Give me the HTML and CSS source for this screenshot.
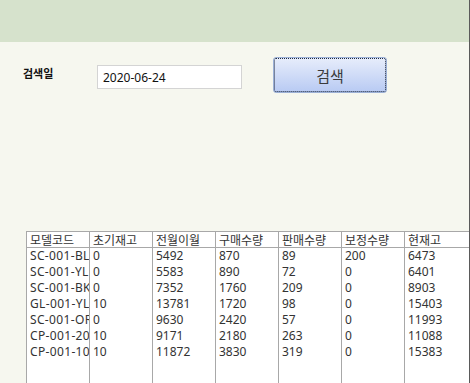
FILE: index.html
```html
<!DOCTYPE html>
<html lang="ko">
<head>
<meta charset="utf-8">
<title>재고 조회</title>
<link rel="stylesheet" href="styles.css">
</head>
<body>
<div class="window">
  <div class="topbar"></div>
  <div class="content">
    <div class="search-row">
      <label class="search-label" for="date">검색일</label>
      <input class="date-input" id="date" type="text" value="2020-06-24">
      <button class="search-btn" type="button">검색</button>
    </div>
    <div class="grid">
      <div class="hd">모델코드</div><div class="hd">초기재고</div><div class="hd">전월이월</div><div class="hd">구매수량</div><div class="hd">판매수량</div><div class="hd">보정수량</div><div class="hd">현재고</div>

      <div class="cell code">SC-001-BL</div><div class="cell">0</div><div class="cell">5492</div><div class="cell">870</div><div class="cell">89</div><div class="cell">200</div><div class="cell">6473</div>
      <div class="cell code">SC-001-YL</div><div class="cell">0</div><div class="cell">5583</div><div class="cell">890</div><div class="cell">72</div><div class="cell">0</div><div class="cell">6401</div>
      <div class="cell code">SC-001-BK</div><div class="cell">0</div><div class="cell">7352</div><div class="cell">1760</div><div class="cell">209</div><div class="cell">0</div><div class="cell">8903</div>
      <div class="cell code">GL-001-YL</div><div class="cell">10</div><div class="cell">13781</div><div class="cell">1720</div><div class="cell">98</div><div class="cell">0</div><div class="cell">15403</div>
      <div class="cell code">SC-001-OR</div><div class="cell">0</div><div class="cell">9630</div><div class="cell">2420</div><div class="cell">57</div><div class="cell">0</div><div class="cell">11993</div>
      <div class="cell code">CP-001-20</div><div class="cell">10</div><div class="cell">9171</div><div class="cell">2180</div><div class="cell">263</div><div class="cell">0</div><div class="cell">11088</div>
      <div class="cell code">CP-001-10</div><div class="cell">10</div><div class="cell">11872</div><div class="cell">3830</div><div class="cell">319</div><div class="cell">0</div><div class="cell">15383</div>

      <div class="cell"></div><div class="cell"></div><div class="cell"></div><div class="cell"></div><div class="cell"></div><div class="cell"></div><div class="cell"></div>
    </div>
  </div>
</div>
</body>
</html>
```

FILE: styles.css
```css
html, body {
  margin: 0;
  padding: 0;
}

body {
  font-family: "Noto Sans", "Noto Sans CJK KR", sans-serif;
  background: #f6f7ef;
  color: #333;
}

.window {
  width: 469px;
  height: 383px;
  border-right: 1px solid #5a5a5a;
  display: flex;
  flex-direction: column;
  overflow: hidden;
  background: #f6f7ef;
}

.topbar {
  height: 42px;
  flex: none;
  background: #d6e2cc;
}

.content {
  flex: 1;
  display: flex;
  flex-direction: column;
  min-height: 0;
}

.search-row {
  display: flex;
  align-items: flex-start;
  padding: 15px 0 0 23px;
  height: 36px;
}

.search-label {
  width: 74px;
  margin-top: 8px;
  font-family: "Noto Sans CJK KR", sans-serif;
  font-weight: bold;
  font-size: 11px;
  line-height: 16px;
  color: #111;
}

.date-input {
  box-sizing: border-box;
  width: 145px;
  height: 24px;
  margin: 8px 0 0 0;
  padding: 0 0 0 5px;
  border: 1px solid #d4d4d4;
  background: #fff;
  font-family: "Noto Sans", "Noto Sans CJK KR", sans-serif;
  font-size: 12px;
  color: #111;
  outline: none;
}

.search-btn {
  box-sizing: border-box;
  width: 114px;
  height: 36px;
  margin-left: 31px;
  padding: 0;
  border: 1px solid #9cb0d6;
  border-radius: 3px;
  background: linear-gradient(to bottom, #e7edfb, #b8caf3);
  outline: 1px dotted #1e2a40;
  outline-offset: -2px;
  font-family: "Noto Sans CJK KR", sans-serif;
  font-size: 15px;
  color: #3a3a3a;
}

.grid {
  flex: 1;
  margin: 138px 0 0 26px;
  display: grid;
  grid-template-columns: repeat(6, 63px) 64px;
  grid-template-rows: 16px repeat(7, 16px) 1fr;
  border-left: 1px solid #a8a8a8;
  border-top: 1px solid #a8a8a8;
  background: #fff;
  font-size: 12px;
  line-height: 16px;
}

.hd,
.cell {
  box-sizing: border-box;
  border-right: 1px solid #a8a8a8;
  padding-left: 3px;
  white-space: nowrap;
  overflow: hidden;
  color: #333;
}

.code {
  letter-spacing: 0.35px;
}

.hd {
  border-bottom: 1px solid #a8a8a8;
  line-height: 15px;
  font-family: "Noto Sans CJK KR", sans-serif;
  font-size: 12px;
}

.hd:nth-child(7),
.cell:nth-child(7n) {
  border-right: none;
}
```
